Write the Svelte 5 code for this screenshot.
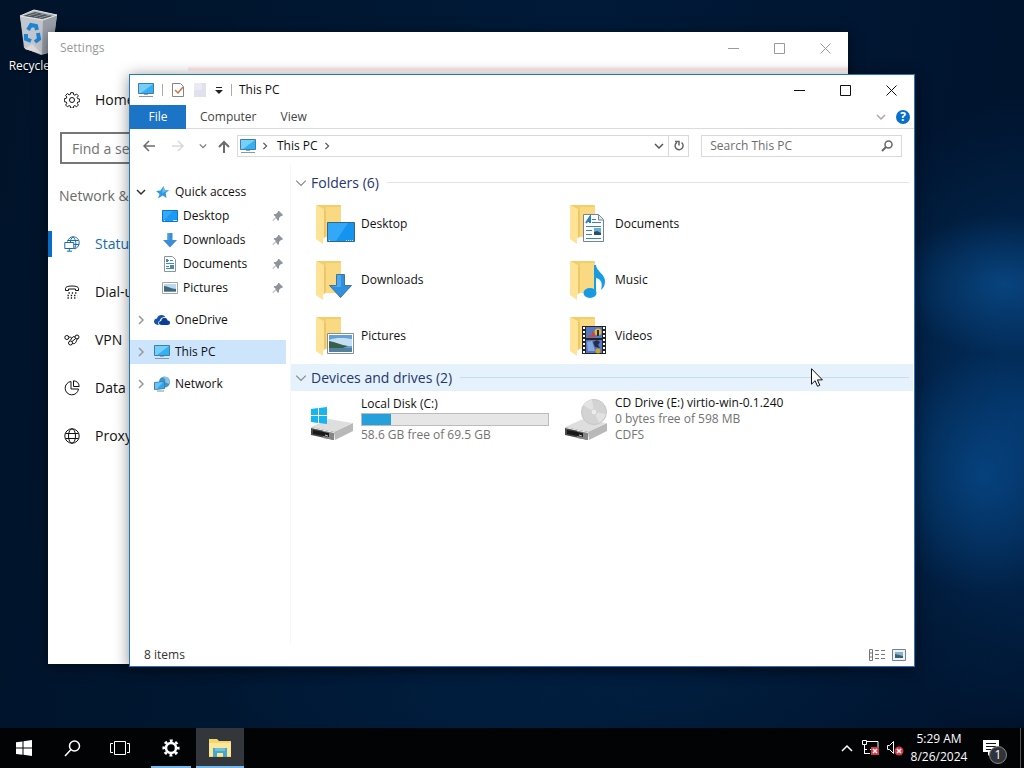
<script>
  const settingsNav = [
    { id: 'status', label: 'Status', active: true },
    { id: 'dialup', label: 'Dial-up' },
    { id: 'vpn', label: 'VPN' },
    { id: 'data', label: 'Data usage' },
    { id: 'proxy', label: 'Proxy' }
  ];

  const quickAccess = [
    { id: 'desktop', label: 'Desktop' },
    { id: 'downloads', label: 'Downloads' },
    { id: 'documents', label: 'Documents' },
    { id: 'pictures', label: 'Pictures' }
  ];

  const roots = [
    { id: 'onedrive', label: 'OneDrive' },
    { id: 'pc', label: 'This PC' },
    { id: 'network', label: 'Network' }
  ];

  const folders = [
    { id: 'desktop', label: 'Desktop' },
    { id: 'documents', label: 'Documents' },
    { id: 'downloads', label: 'Downloads' },
    { id: 'music', label: 'Music' },
    { id: 'pictures', label: 'Pictures' },
    { id: 'videos', label: 'Videos' }
  ];

  const disk = { free: 58.6, total: 69.5 };

  let selected = $state('pc');
  let settingsQuery = $state('');
  let search = $state('');
  let usedPercent = $derived(((disk.total - disk.free) / disk.total) * 100);
</script>

{#snippet controls()}
  <div class="controls">
    <button aria-label="Minimize"><svg width="11" height="11"><path d="M0 5.5h11" /></svg></button>
    <button aria-label="Maximize"><svg width="11" height="11"><path d="M.5.5h10v10H.5z" /></svg></button>
    <button aria-label="Close"><svg width="11" height="11"><path d="M.5.5l10 10M10.5.5l-10 10" /></svg></button>
  </div>
{/snippet}

{#snippet smallIcon(id)}
  <svg width="16" height="16" viewBox="0 0 16 16" aria-hidden="true">
    {#if id === 'pc'}
      <path d="M.5 1.500h15v10H.5z" fill="#35b0f3" stroke="#3f7ea8" />
      <path d="M1 2h14L3 11H1z" fill="#74d0fb" />
      <path d="M6 12h4v1H6z" fill="#9aa7b0" />
      <path d="M1 14.500h14" stroke="#8299a8" />
    {:else if id === 'star'}
      <path d="M9.500 2l1.200 4 4.300.3-3.300 2.700L12.500 14 8.700 11.500 4 14.500 5.500 10 2 7l4.500-.5z" fill="#2f9ae0" />
      <path d="M9.500 2l1.200 4 4.300.3L8 9z" fill="#64bdf2" />
    {:else if id === 'desktop'}
      <path d="M.5 2.500h15v11H.5z" fill="#1b9bf5" stroke="#0f76c8" />
      <path d="M1 3h10L3 11H1z" fill="#35aafa" />
      <path d="M2 12.500h1M11 12.500h4" stroke="#c9e9ff" />
    {:else if id === 'downloads'}
      <path d="M5.500 1h5v7H15l-7 7.500L1 8h4.500z" fill="#3b8ed6" />
      <path d="M5.500 1h2v7H3.500L1 8h4.500z" fill="#4ba0e4" />
    {:else if id === 'documents'}
      <path d="M2.500.5h8l3 3v12h-11z" fill="#fff" stroke="#87959f" />
      <path d="M4 4.500h3M8 4.500h3M4 7.500h8M4 10.500h3M4 12.500h8" stroke="#3d8cc4" />
      <path d="M8 9h4v3H8zM4 3h2v3H4z" fill="#4d88ae" />
    {:else if id === 'pictures'}
      <path d="M.5 2.500h15v11H.5z" fill="#fff" stroke="#9da6ad" />
      <path d="M2 4h12v8H2z" fill="#b9d9ee" />
      <path d="M2 6c4 0 7 3 12 3v3H2z" fill="#41687b" />
      <path d="M2 11h12v1H2z" fill="#7796a5" />
    {:else if id === 'onedrive'}
      <path d="M5 13C2 13 0 11.800 0 9.600c0-1.800 1.400-3 3-3C3.500 4 5.500 3 7.500 3c1.800 0 3 .8 3.800 2-3.800 0-5.300 2.300-5.500 4-1.800.4-2 2.800-.8 4z" fill="#1552a8" />
      <path d="M7.800 13C6 13 5 12.200 5 11s1-2 2.200-2c0-2 1.500-3.300 3.200-3.300 1.800 0 3 1.300 3.200 2.800 1.500 0 2.400.9 2.400 2.300S15 13 13.500 13z" fill="#0b3f97" />
    {:else if id === 'network'}
      <circle cx="10.500" cy="6" r="5.500" fill="#3f93cb" />
      <path d="M8 1c3 1 4 3 3 5l4 2c2-3 0-6-2-7z" fill="#8cc4e6" />
      <path d="M.5 6.500l10-1v7l-10 1z" fill="#31a7ea" stroke="#467fa4" />
      <path d="M1 7l8-1-6 7H1z" fill="#66c3f5" />
      <path d="M3 15h7" stroke="#7691a2" />
    {/if}
  </svg>
{/snippet}

{#snippet folderIcon(id)}
  <svg width="48" height="48" viewBox="0 0 48 48" aria-hidden="true">
    <path d="M9 5h23q1 0 1 1v31H12z" fill="#f3cd6c" />
    <path d="M18 8q0-1 2-1h13v30H18z" fill="#f9da82" />
    <path d="M8 5l8 4q2 1 2 3v23q0 2-2 3l-1 1v5l-7-5z" fill="#fee396" />
    <path d="M16 9q2 1 2 3v23q0 2-2 3z" fill="#edc766" />
    {#if id === 'desktop'}
      <path d="M19.500 22.500h27v19h-27z" fill="#1494ee" stroke="#31678f" />
      <path d="M20 23h20L28 41h-8z" fill="#34a8f8" />
      <path d="M21 40.500h2M38 40.500h7" stroke="#bfe4ff" stroke-dasharray="1 1" />
    {:else if id === 'documents'}
      <path d="M21.500 14.500h15l5 5v22h-20z" fill="#fff" stroke="#748490" />
      <path d="M36.500 15v5H41" fill="#dde9f0" stroke="#748490" />
      <path d="M24 23l4-6v6M25 21h3" fill="none" stroke="#2680b8" stroke-width="2" />
      <path d="M30 19.500h4M30 22.500h9M24 26.500h15M24 30.500h6M24 34.500h6M24 38.500h15" stroke="#3787bb" />
      <path d="M32 28h7v7h-7z" fill="#6dacd2" />
      <path d="M32 32l3-1 4 2v2h-7z" fill="#294d64" />
    {:else if id === 'downloads'}
      <path d="M28.500 18.500h8v11h7l-11 12-11-12h7z" fill="#2f90df" stroke="#42739e" />
      <path d="M29 19h4v12h-6l-4-1h6z" fill="#4caaf1" />
    {:else if id === 'music'}
      <ellipse cx="28" cy="37" rx="6.500" ry="5" fill="#159be3" />
      <path d="M32 9h2c0 6 9 9 9 16 0 4-1 6-4 9 2-7 0-11-5-12v15h-2z" fill="#179ce5" />
    {:else if id === 'pictures'}
      <path d="M19.500 21.500h26v20h-26z" fill="#fff" stroke="#849099" />
      <path d="M21 23h23v17H21z" fill="#629fdb" />
      <path d="M21 28c7-3 16-2 23-1v7H21z" fill="#c6dfef" />
      <path d="M21 29c6 1 12 4 19 5l-5 2H21z" fill="#365f4d" />
      <path d="M21 36h23v4H21z" fill="#54819c" />
    {:else if id === 'videos'}
      <path d="M20 14h24v28H20z" fill="#20252c" />
      <path d="M24 15h16v11H24zM24 28h16v13H24z" fill="#5877c1" />
      <path d="M22 15v26M42 15v26" stroke="#fff" stroke-width="2" stroke-dasharray="2 2" />
      <path d="M30 20h3v5h-7v-2h4z" fill="#c44b3e" />
      <circle cx="36" cy="20" r="3.500" fill="#e5ba32" />
      <path d="M35 18h2v6h-2zM31 30l4-2 3 2-2 3 2 3-5-1z" fill="#222d48" />
      <path d="M25 30l5-1 3 10h-7z" fill="#87a7df" />
      <circle cx="36" cy="39" r="2.500" fill="#d3a32e" />
    {/if}
  </svg>
{/snippet}

{#snippet driveBody()}
  <path d="M3 32l18-8 23 4-18 9z" fill="#dedede" />
  <path d="M3 32l23 5v8L3 40z" fill="#4a4a4a" />
  <path d="M15 35l11 2v8l-11-2z" fill="#858585" />
  <path d="M26 37l19-9v8l-18 9z" fill="#b9b9b9" />
  <path d="M5 35l16 3v4L5 39z" fill="#191919" />
  <path d="M3 32l23 5v1L3 33z" fill="#f4f4f4" />
  <path d="M17 40l3 1" stroke="#b5d8b2" />
{/snippet}

{#snippet settingsIcon(id)}
  <svg class="line-icon" width="16" height="16" viewBox="0 0 16 16" aria-hidden="true">
    {#if id === 'home'}
      <path d="M6.700.7h2.600l.4 2 1.200.5 1.700-1.200 1.800 1.800-1.200 1.700.5 1.200 2 .4v2.600l-2 .4-.5 1.200 1.200 1.700-1.800 1.800-1.700-1.200-1.200.5-.4 2H6.700l-.4-2-1.200-.5-1.700 1.200-1.800-1.800 1.200-1.700-.5-1.200-2-.4V6.700l2-.4.5-1.200L1.600 3.400l1.800-1.800 1.700 1.200 1.200-.5z" />
      <circle cx="8" cy="8" r="2.500" />
    {:else if id === 'status'}
      <path d="M3.500 5.500C4.500 2.500 6.500.8 9 .8c3.600 0 6.200 2.500 6.200 6 0 3.200-2 5.500-5.200 6M3.500 4.500h11M9 .8C7 2.500 6.500 4 6.500 6M9 .8c3.500 3.500 3.500 8 1.500 12M10 8.500h5" />
      <path d="M.8 6.500h9v6h-9zM5.300 12.500v2.500M3 15.200h5" />
    {:else if id === 'dialup'}
      <path d="M1.500 6.500V4.300Q2 2 8 2t6.500 2.300v2.200h-3V5h-7v1.500z" />
      <path d="M4.500 9h8M3.500 11.500h10M3.500 14h10" stroke-width="1.500" stroke-dasharray="1.300 2" />
    {:else if id === 'vpn'}
      <circle cx="2.800" cy="5.500" r="2" /><circle cx="13" cy="5" r="2" /><circle cx="6.500" cy="11" r="2" />
      <path d="M4.800 5.500C8 4 8.500 7 5.500 9M8 9.500L11.800 6.500M8.500 11.500c4 1 3.500-3 5-5M7.500 6.500Q9 3.500 11 5" />
    {:else if id === 'data'}
      <path d="M7 1.500A6.700 6.700 0 1 0 14.500 9H7z" />
      <path d="M9.500.8V6.500h5.700C15 3 13 1 9.500.8z" />
    {:else if id === 'proxy'}
      <circle cx="8" cy="8" r="7.200" />
      <ellipse cx="8" cy="8" rx="3.500" ry="7.200" />
      <path d="M1.500 5.500h13M1.500 10.500h13" />
    {/if}
  </svg>
{/snippet}

{#snippet chevron(size)}
  <svg class="chevron" width={size} height={size} viewBox="0 0 10 10" aria-hidden="true"><path d="M1 3l4 4 4-4" /></svg>
{/snippet}

<div class="desktop">
  <div class="workspace">
    <button class="shortcut">
      <svg width="44" height="48" viewBox="0 0 44 48" aria-hidden="true">
        <path d="M2 8l14-6 23 5-5 37-11 3-17-7z" fill="#b7bbc1" />
        <path d="M2 8l23 4-1 34-17-5z" fill="#c3c6cc" />
        <path d="M25 12l14-5-5 37-10 2z" fill="#999ea7" />
        <path d="M5 8l12-4 18 4-11 3z" fill="#4c5359" />
        <path d="M10 8l10-3M16 9l10-3M21 10l11-3" stroke="#8f969b" />
        <path d="M2 8l14-6 23 5-14 5z" fill="none" stroke="#e4e6e8" />
        <path d="M10 22l3-5 5 1 1 4M20 25l1 6-4 3M13 33l-5-2V26" fill="none" stroke="#1f83d3" stroke-width="4" />
        <path d="M7 41l7-5 10 10z" fill="#dfd9d8" />
      </svg>
      <span>Recycle Bin</span>
    </button>

    <section class="window settings" aria-label="Settings">
      <header class="titlebar">
        <span class="title">Settings</span>
        {@render controls()}
      </header>
      <div class="strip"></div>
      <a class="settings-link" href="#home">{@render settingsIcon('home')}Home</a>
      <input class="find" type="text" placeholder="Find a setting" aria-label="Find a setting" bind:value={settingsQuery} />
      <h2>Network &amp; Internet</h2>
      <nav>
        {#each settingsNav as item}
          <a class="settings-link" class:active={item.active} href="#{item.id}">{@render settingsIcon(item.id)}{item.label}</a>
        {/each}
      </nav>
    </section>

    <section class="window explorer" aria-label="This PC">
      <header class="titlebar">
        <div class="quickbar">
          {@render smallIcon('pc')}
          <i class="sep"></i>
          <button aria-label="Properties">
            <svg width="14" height="16"><path d="M1.500 1.500h8l3 3v10h-11z" fill="#fff" stroke="#8b8582" /><path d="M4 8l3 3 5-6" fill="none" stroke="#c8734b" stroke-width="1.500" /></svg>
          </button>
          <button aria-label="New folder">
            <svg width="14" height="16"><path d="M1 1h12v14H1z" fill="#dfe2ec" /><path d="M1 1h8v7H1z" fill="#e9eaf2" /></svg>
          </button>
          <button aria-label="Customize Quick Access Toolbar">
            <svg width="8" height="8"><path d="M1 1.500h6" stroke="#222" /><path d="M0 4h8L4 8z" fill="#222" /></svg>
          </button>
          <i class="sep"></i>
        </div>
        <span class="title">This PC</span>
        {@render controls()}
      </header>

      <div class="ribbon">
        <button class="file">File</button>
        <button>Computer</button>
        <button>View</button>
        <div class="ribbon-end">
          <button class="expand" aria-label="Expand the Ribbon">{@render chevron(10)}</button>
          <button class="help" aria-label="Help">?</button>
        </div>
      </div>

      <div class="addressbar">
        <div class="history">
          <button aria-label="Back"><svg width="14" height="12"><path d="M13 6H2M7 1L2 6l5 5" stroke="#6c6c6c" stroke-width="1.500" fill="none" /></svg></button>
          <button aria-label="Forward"><svg width="14" height="12"><path d="M1 6h11M7 1l5 5-5 5" stroke="#d9d9d9" stroke-width="1.500" fill="none" /></svg></button>
          <div class="pair">
            <button aria-label="Recent locations">{@render chevron(8)}</button>
            <button aria-label="Up"><svg width="12" height="13"><path d="M6 13V2M1 7l5-5 5 5" stroke="#6c6c6c" stroke-width="2" fill="none" /></svg></button>
          </div>
        </div>
        <div class="path">
          {@render smallIcon('pc')}
          <span class="crumb-arrow">{@render chevron(8)}</span>
          <a href="#this-pc">This PC</a>
          <span class="crumb-arrow">{@render chevron(8)}</span>
          <button class="drop" aria-label="Previous locations">{@render chevron(10)}</button>
          <button class="refresh" aria-label="Refresh">
            <svg width="12" height="12"><path d="M8.500 2.500A4 4 0 1 1 4 2.300" fill="none" stroke="#666" stroke-width="1.500" /><path d="M2 1.500h4v4" fill="none" stroke="#666" stroke-width="1.500" /></svg>
          </button>
        </div>
        <label class="search">
          <input type="text" placeholder="Search This PC" aria-label="Search This PC" bind:value={search} />
          <svg width="12" height="12"><circle cx="7.500" cy="4.500" r="3.500" fill="none" stroke="#666" stroke-width="1.500" /><path d="M5 7l-4 4" stroke="#666" stroke-width="2" /></svg>
        </label>
      </div>

      <div class="body">
        <nav class="tree">
          <div class="group">
            <button class="node open">{@render chevron(10)}{@render smallIcon('star')}<span>Quick access</span></button>
            {#each quickAccess as item}
              <button class="node child">
                {@render smallIcon(item.id)}
                <span>{item.label}</span>
                <svg class="pin" width="12" height="12" viewBox="0 0 12 12"><path d="M7 1l4 4-1 1H9L7 8v2L6 11 4 8 1 11l-.5-.5L4 7 1.500 5l1-1H4l2-2V1z" fill="#8d939a" /></svg>
              </button>
            {/each}
          </div>
          {#each roots as item}
            <button class="node" class:selected={selected === item.id} onclick={() => (selected = item.id)}>
              {@render chevron(10)}{@render smallIcon(item.id)}<span>{item.label}</span>
            </button>
          {/each}
        </nav>

        <main>
          <button class="section-head">{@render chevron(12)}<span>Folders (6)</span></button>
          <div class="tiles">
            {#each folders as folder}
              <button class="tile">{@render folderIcon(folder.id)}<span>{folder.label}</span></button>
            {/each}
          </div>
          <button class="section-head hover">{@render chevron(12)}<span>Devices and drives (2)</span></button>
          <div class="tiles">
            <button class="tile">
              <svg width="48" height="48" viewBox="0 0 48 48" aria-hidden="true">
                {@render driveBody()}
                <path d="M3 14l7-1v7H3zM11 13l8-1v8h-8zM3 21h7v7l-7-1zM11 21h8v8l-8-1z" fill="#18b4ee" />
              </svg>
              <span class="details">
                <span>Local Disk (C:)</span>
                <span class="meter"><span class="used" style="width: {usedPercent}%"></span></span>
                <span class="muted">{disk.free} GB free of {disk.total} GB</span>
              </span>
            </button>
            <button class="tile">
              <svg width="48" height="48" viewBox="0 0 48 48" aria-hidden="true">
                {@render driveBody()}
                <circle cx="32" cy="17" r="12.500" fill="#d3d3d3" stroke="#c6c6c6" />
                <path d="M32 17L21 10q4-5 9-5zM32 17l12 2q-2 6-7 9z" fill="#e2e2e2" />
                <circle cx="32" cy="17" r="3" fill="#ececec" stroke="#d0d0d0" />
              </svg>
              <span class="details">
                <span>CD Drive (E:) virtio-win-0.1.240</span>
                <span class="muted">0 bytes free of 598 MB</span>
                <span class="muted">CDFS</span>
              </span>
            </button>
          </div>
        </main>
      </div>

      <footer class="status">
        <span>8 items</span>
        <div class="views">
          <button aria-label="Details view"><svg width="16" height="12"><path d="M.5.5h3v11h-3zM0 4h4M0 8h4" fill="none" stroke="#777" /><path d="M6 1.500h4M12 1.500h4M6 5.500h4M12 5.500h4M6 9.500h4M12 9.500h4" stroke="#777" /></svg></button>
          <button aria-label="Large icons view"><svg width="14" height="12"><path d="M.5.5h13v11H.5z" fill="#eaf3fa" stroke="#777f88" /><path d="M3 3h8v6H3z" fill="#8fafc4" /><path d="M3 5l8 2v2H3z" fill="#3a6077" /></svg></button>
        </div>
      </footer>
    </section>

    <svg class="cursor" width="12" height="19" viewBox="0 0 12 19" aria-hidden="true">
      <path d="M.5.7v15.500l3.600-3.500 2.400 5.600 2.300-1-2.400-5.400h5z" fill="#fff" stroke="#111" />
    </svg>
  </div>

  <footer class="taskbar">
    <button aria-label="Start"><svg width="16" height="16"><path d="M0 2.300l6.500-.9v6.200H0zM7.500 1.200L16 0v7.600H7.500zM0 8.600h6.500v6.200L0 13.900zM7.500 8.600H16V16l-8.500-1.200z" fill="#fff" /></svg></button>
    <button aria-label="Search"><svg width="17" height="17"><circle cx="10.500" cy="6" r="5" fill="none" stroke="#fff" stroke-width="1.500" /><path d="M7 9.500L1 16" stroke="#fff" stroke-width="1.500" /></svg></button>
    <button aria-label="Task View"><svg width="20" height="14"><path d="M4.500.5h11v13h-11zM3 2.500H.5v9H3M17 2.500h2.500v9H17" fill="none" stroke="#fff" /></svg></button>
    <div class="apps">
      <button class="running" aria-label="Settings">
        <svg width="18" height="18" viewBox="0 0 18 18"><circle cx="9" cy="9" r="5" fill="none" stroke="#fff" stroke-width="2.500" /><circle cx="9" cy="9" r="7.300" fill="none" stroke="#fff" stroke-width="2.600" stroke-dasharray="2.900 2.833" stroke-dashoffset="1.450" /></svg>
      </button>
      <button class="running current" aria-label="File Explorer">
        <svg width="22" height="18"><path d="M0 0h8l2 2h12v16H0z" fill="#f6d56d" /><path d="M0 4h22v13H0z" fill="#fce69a" /><path d="M4 9h14v9h-4v-4H8v4H4z" fill="#43a7cb" /><path d="M6 9h10v3H6z" fill="#6bc1d8" /></svg>
      </button>
    </div>
    <div class="tray">
      <button aria-label="Show hidden icons"><svg width="12" height="8"><path d="M1 7l5-5 5 5" fill="none" stroke="#fff" stroke-width="1.500" /></svg></button>
      <button aria-label="Network: not connected"><svg width="18" height="16"><path d="M5 1.500h11v8H8M.5.5h4v4h-4zM2.500 4v10M5 9.500H2.500M2 13.500h6" fill="none" stroke="#fff" /><path d="M9 7h8v8H9z" fill="#d83542" /><path d="M11 9l4 4M15 9l-4 4" stroke="#fff" stroke-width="1.500" /></svg></button>
      <button aria-label="Volume: unavailable"><svg width="18" height="16"><path d="M1.500 5.500h2l4-4v12l-4-4h-2z" fill="none" stroke="#fff" /><circle cx="13" cy="11" r="4.500" fill="#d83542" /><path d="M11 9l4 4M15 9l-4 4" stroke="#fff" stroke-width="1.500" /></svg></button>
      <button class="clock"><span>5:29 AM</span><span>8/26/2024</span></button>
      <button class="notify" aria-label="Notifications">
        <svg width="16" height="16"><path d="M0 0h16v12H8l-3 4v-4H0z" fill="#fff" /><path d="M3 3.500h10M3 6.500h10M3 9.500h6" stroke="#111" /></svg>
        <span class="badge">1</span>
      </button>
      <button class="peek" aria-label="Show desktop"></button>
    </div>
  </footer>
</div>

<style>
  :global(body) {
    margin: 0;
    background: #001022;
  }

  .desktop {
    height: 100vh;
    min-height: 560px;
    display: flex;
    flex-direction: column;
    overflow: hidden;
    font-family: 'Open Sans', 'Noto Sans', sans-serif;
    font-size: 12px;
    line-height: 16px;
    color: #111;
    background:
      radial-gradient(ellipse 110px 70px at 98% 37%, rgba(12, 88, 158, 0.6), transparent),
      radial-gradient(ellipse 100px 120px at 96% 62%, rgba(8, 78, 145, 0.65), transparent),
      radial-gradient(ellipse 200px 320px at 100% 54%, rgba(4, 64, 125, 0.7), transparent),
      radial-gradient(ellipse 420px 90px at 62% 90%, rgba(2, 38, 76, 0.45), transparent),
      linear-gradient(100deg, #001329, #001a38 50%, #00122b);
  }

  button,
  input {
    font: inherit;
    color: inherit;
    background: none;
    border: 0;
    border-radius: 0;
    padding: 0;
    margin: 0;
  }

  a {
    color: inherit;
    text-decoration: none;
  }

  svg {
    display: block;
    flex: none;
  }

  .workspace {
    flex: 1;
    position: relative;
  }

  .shortcut {
    position: absolute;
    top: 8px;
    left: 3px;
    width: 74px;
    display: flex;
    flex-direction: column;
    align-items: center;
    gap: 2px;
    color: #fff;
    text-shadow: 0 1px 2px #000;
  }

  .window {
    position: absolute;
    display: flex;
    flex-direction: column;
    background: #fff;
  }

  .titlebar {
    display: flex;
    align-items: center;
    flex: none;
  }

  .title {
    flex: 1;
  }

  .controls {
    display: flex;
  }

  .controls button {
    width: 46px;
    height: 30px;
    display: grid;
    place-items: center;
  }

  .controls svg {
    fill: none;
    stroke: currentColor;
  }

  /* Settings window */
  .settings {
    inset: 32px 176px 64px 48px;
    font-size: 14px;
    line-height: 20px;
    box-shadow: 0 2px 12px rgba(0, 0, 0, 0.5);
  }

  .settings .titlebar {
    height: 32px;
    padding-left: 12px;
    font-size: 12px;
    color: #999;
  }

  .strip {
    height: 6px;
    margin: 2px 0 4px 140px;
    background: linear-gradient(#fff, #ffe6e6, #fff);
  }

  .settings-link {
    display: flex;
    align-items: center;
    gap: 15px;
    width: 300px;
    height: 48px;
    padding-left: 12px;
    border-left: 4px solid transparent;
    box-sizing: border-box;
  }

  .settings > .settings-link {
    margin-bottom: 8px;
  }

  .active {
    color: #1a6ba9;
    border-image: linear-gradient(transparent 25%, #0a6cc4 25%, #0a6cc4 75%, transparent 75%) 1;
    border-width: 0 0 0 4px;
  }

  .line-icon {
    fill: none;
    stroke: currentColor;
  }

  .find {
    width: 276px;
    height: 32px;
    margin-left: 12px;
    padding: 0 10px;
    border: 2px solid #777;
    box-sizing: border-box;
  }

  .find::placeholder {
    color: #737373;
    opacity: 1;
  }

  h2 {
    margin: 22px 0 14px 11px;
    font-size: 14px;
    font-weight: 400;
    color: #6a6a6a;
  }

  /* Explorer window */
  .explorer {
    inset: 74px 109px 61px 129px;
    border: 1px solid #2277bd;
    box-shadow: 0 2px 14px rgba(0, 0, 0, 0.45);
  }

  .explorer .titlebar {
    height: 30px;
  }

  .quickbar {
    display: flex;
    align-items: center;
    gap: 8px;
    padding: 0 7px 0 8px;
  }

  .sep {
    width: 1px;
    height: 12px;
    background: #aaa;
  }

  .ribbon {
    display: flex;
    height: 24px;
    flex: none;
    color: #444;
    border-bottom: 1px solid #dadbdc;
    box-sizing: border-box;
  }

  .ribbon > button {
    padding: 0 12px;
  }

  .ribbon > .file {
    width: 56px;
    margin: 0 2px -1px 0;
    padding: 0;
    background: #1b74c6;
    color: #fff;
  }

  .ribbon-end {
    display: flex;
    align-items: center;
    gap: 10px;
    margin-left: auto;
    padding-right: 4px;
  }

  .expand {
    color: #aaa;
  }

  .help {
    width: 14px;
    height: 14px;
    line-height: 14px;
    font-weight: 700;
    border-radius: 50%;
    background: #0a6fc9;
    color: #fff;
  }

  .chevron {
    fill: none;
    stroke: currentColor;
    stroke-width: 1.5;
  }

  .addressbar {
    display: flex;
    align-items: center;
    flex: none;
    height: 34px;
    padding-right: 12px;
  }

  .history {
    display: flex;
    align-items: center;
    justify-content: space-between;
    width: 88px;
    padding: 0 7px 0 12px;
    color: #777;
  }

  .pair {
    display: flex;
    align-items: center;
    gap: 11px;
  }

  .path,
  .search {
    display: flex;
    align-items: center;
    height: 22px;
    border: 1px solid #d9d9d9;
    box-sizing: border-box;
  }

  .path {
    flex: 1;
    padding-left: 2px;
  }

  .crumb-arrow {
    margin: 0 8px 0 5px;
    color: #555;
    transform: rotate(-90deg);
  }

  .drop {
    margin-left: auto;
    padding: 0 4px;
    color: #555;
  }

  .refresh {
    align-self: stretch;
    width: 20px;
    display: grid;
    place-items: center;
    border-left: 1px solid #d9d9d9;
  }

  .search {
    width: 26%;
    margin-left: 12px;
    padding: 0 8px;
  }

  .search input {
    flex: 1;
    min-width: 0;
    outline: none;
  }

  .search input::placeholder {
    color: #6d6d6d;
    opacity: 1;
  }

  .body {
    flex: 1;
    min-height: 0;
    display: flex;
  }

  .tree {
    width: 156px;
    flex: none;
    display: flex;
    flex-direction: column;
    gap: 8px;
    padding: 17px 4px 0 0;
    border-right: 1px solid #f7f7f7;
  }

  .node {
    display: flex;
    align-items: center;
    gap: 5px;
    width: 100%;
    height: 24px;
    flex: none;
    padding-left: 6px;
  }

  .node .chevron {
    margin-right: 3px;
    color: #999;
    transform: rotate(-90deg);
  }

  .node.open .chevron {
    color: #333;
    transform: none;
  }

  .node.child {
    padding-left: 32px;
  }

  .pin {
    margin: 0 2px 0 auto;
  }

  .selected {
    background: #cce5fd;
  }

  main {
    flex: 1;
    min-width: 0;
    padding: 6px 1px 0 0;
  }

  .section-head {
    display: flex;
    align-items: center;
    width: 100%;
    height: 27px;
    padding: 0 4px;
    gap: 4px;
    font-size: 14px;
    line-height: 20px;
    color: #26366f;
  }

  .section-head::after {
    content: '';
    flex: 1;
    height: 1px;
    margin-left: 4px;
    background: #e0e4e8;
  }

  .section-head .chevron {
    color: #888;
    stroke-width: 1;
  }

  .hover {
    background: #e5f2fc;
  }

  .hover::after {
    background: #c9dcea;
  }

  .tiles {
    display: grid;
    grid-template-columns: repeat(auto-fill, 254px);
    padding-left: 17px;
  }

  .tile {
    display: flex;
    align-items: center;
    gap: 5px;
    height: 56px;
    text-align: left;
  }

  .details {
    display: flex;
    flex-direction: column;
  }

  .muted {
    color: #737373;
  }

  .meter {
    display: block;
    width: 188px;
    height: 13px;
    margin: 1px 0;
    border: 1px solid #bcbcbc;
    box-sizing: border-box;
    background: #e6e6e6;
  }

  .used {
    display: block;
    height: 100%;
    background: #26a0da;
  }

  .status {
    display: flex;
    align-items: center;
    justify-content: space-between;
    flex: none;
    height: 22px;
    padding: 0 8px 0 14px;
    color: #333;
  }

  .views {
    display: flex;
    gap: 7px;
  }

  .cursor {
    position: absolute;
    left: 811px;
    top: 368px;
  }

  /* Taskbar */
  .taskbar {
    display: flex;
    height: 40px;
    flex: none;
    background: #020305;
    color: #fff;
  }

  .taskbar button {
    display: grid;
    place-items: center;
  }

  .taskbar > button,
  .running {
    width: 48px;
  }

  .apps {
    display: flex;
    gap: 1px;
    margin-left: 3px;
  }

  .running {
    background: linear-gradient(#76b9ed, #76b9ed) bottom / 40px 2px no-repeat;
  }

  .current {
    background-color: #33373b;
    background-size: 48px 2px;
  }

  .tray {
    display: flex;
    margin-left: auto;
  }

  .tray button {
    width: 24px;
  }

  .tray .clock {
    width: 64px;
    align-content: center;
    row-gap: 2px;
  }

  .tray .notify {
    position: relative;
    width: 48px;
    margin-right: 1px;
    padding-right: 8px;
  }

  .badge {
    position: absolute;
    right: 12px;
    bottom: 4px;
    width: 16px;
    border: 1px solid #888;
    border-radius: 50%;
    background: #30343a;
  }

  .tray .peek {
    width: 4px;
    border-left: 1px solid #555;
  }
</style>
